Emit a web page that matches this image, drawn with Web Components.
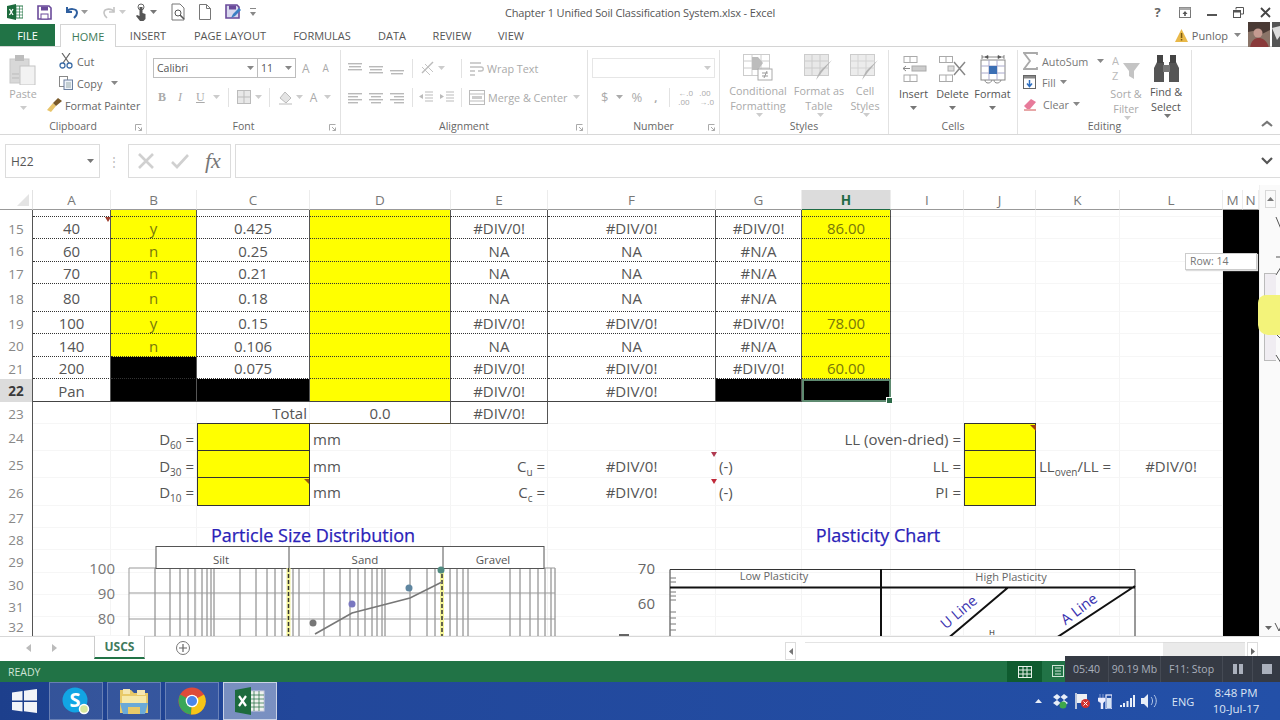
<!DOCTYPE html>
<html>
<head>
<meta charset="utf-8">
<title>Chapter 1 Unified Soil Classification System.xlsx - Excel</title>
<style>
  html, body { margin: 0; height: 720px; overflow: hidden; background: #fff; }
  body { display: flex; flex-direction: column; font-family: "Open Sans", "Liberation Sans", sans-serif; position: relative; }
</style>
</head>
<body>
<xl-titlebar></xl-titlebar>
<xl-tabs></xl-tabs>
<xl-ribbon></xl-ribbon>
<xl-formula-bar></xl-formula-bar>
<xl-sheet></xl-sheet>
<xl-sheet-tabs></xl-sheet-tabs>
<xl-status></xl-status>
<win-taskbar></win-taskbar>

<script>
// small svg helper: w, h, inner markup
const svg = (w, h, inner) => `<svg xmlns="http://www.w3.org/2000/svg" width="${w}" height="${h}" viewBox="0 0 ${w} ${h}" style="display:block;flex:none">${inner}</svg>`;

const caret = (c = '#888') => svg(7, 4, `<path d="M0 0h7L3.5 4z" fill="${c}"/>`);

// lines used by the alignment icons
const lines = (rows, c = '#b9b9b9') => svg(16, 14, rows.map(r => `<rect x="${r[0]}" y="${r[1]}" width="${r[2]}" height="1.4" fill="${c}"/>`).join(''));

const ICONS = {
  xl: svg(16, 16, `<rect x="6" y="2" width="10" height="12" fill="#fff" stroke="#2a7a4a"/><path d="M9 2v12M12.5 2v12M6 5h10M6 8h10M6 11h10" stroke="#2a7a4a" stroke-width=".7"/><path d="M0 2l9-2v16l-9-2z" fill="#1d6b3d"/><path d="M2.5 5l3.5 6M6 5l-3.5 6" stroke="#fff" stroke-width="1.3"/>`),
  save: svg(15, 15, `<path d="M1 1h11l2 2v11H1z" fill="#fff" stroke="#6a4a9a" stroke-width="1.6"/><rect x="4" y="1.5" width="7" height="4" fill="#6a4a9a"/><rect x="4" y="9" width="7" height="5" fill="#fff" stroke="#6a4a9a"/>`),
  undo: svg(16, 14, `<path d="M4 2v5h5" fill="none" stroke="#2f5f9f" stroke-width="2"/><path d="M4 7c2-4 10-4 10 1 0 2-1 3-3 5" fill="none" stroke="#2f5f9f" stroke-width="2"/>`),
  redo: svg(16, 14, `<path d="M12 2v5H7" fill="none" stroke="#c4c4c4" stroke-width="1.6"/><path d="M12 7C10 3 2 3 2 8c0 2 1 3 3 5" fill="none" stroke="#c4c4c4" stroke-width="1.6"/>`),
  touch: svg(14, 18, `<circle cx="7" cy="4" r="3" fill="none" stroke="#666"/><path d="M5.5 4h3v6l3 1v5l-2 2H6l-4-5 1-1 2.5 1z" fill="#555"/>`),
  preview: svg(15, 18, `<path d="M1 1h8l4 4v12H1z" fill="#fff" stroke="#777"/><circle cx="7" cy="10" r="3" fill="#fff" stroke="#555"/><path d="M9 12l4 4" stroke="#555" stroke-width="1.6"/>`),
  page: svg(12, 16, `<path d="M.5.5h7l4 4v11H.5z" fill="#fff" stroke="#777"/><path d="M7.5.5v4h4" fill="none" stroke="#777"/>`),
  saveas: svg(16, 16, `<path d="M1 1h11l2 2v11H1z" fill="#d8d8ee" stroke="#6a4a9a" stroke-width="1.6"/><rect x="4" y="1.5" width="7" height="4" fill="#6a4a9a"/><path d="M6 14l2-4 6-6 2 2-6 6z" fill="#3a7fc4"/>`),
  qat: svg(6, 8, `<path d="M0 0h6v1H0zM0 4h6L3 8z" fill="#888"/>`),
  help: `<span style="font:700 13px 'Open Sans',sans-serif;color:#666">?</span>`,
  display: svg(12, 11, `<rect x=".5" y=".5" width="11" height="10" fill="none" stroke="#777"/><rect x=".5" y=".5" width="11" height="2.5" fill="#aaa"/><path d="M6 4l2.5 3h-5zM5.2 7h1.6v2H5.2z" fill="#555"/>`),
  min: svg(10, 10, `<rect x="0" y="7" width="10" height="2" fill="#555"/>`),
  restore: svg(11, 11, `<path d="M3 2.5V.5h7.5V7H8" fill="none" stroke="#555"/><rect x=".5" y="3.5" width="7" height="7" fill="#fff" stroke="#555"/><rect x=".5" y="3.5" width="7" height="2" fill="#555"/>`),
  close: svg(11, 11, `<path d="M1 1l9 9M10 1l-9 9" stroke="#444" stroke-width="1.8"/>`),
  warn: svg(13, 14, `<path d="M6.5 1L13 14H0z" fill="#e9b949"/><rect x="5.8" y="5" width="1.5" height="5" fill="#7a5a10"/><rect x="5.8" y="11" width="1.5" height="1.5" fill="#7a5a10"/>`),
  avatar: svg(22, 26, `<rect width="22" height="26" fill="#8a7468"/><path d="M0 0h22v8L14 12 10 8 0 10z" fill="#4a3a35"/><circle cx="10" cy="11" r="4.5" fill="#c49a90"/><path d="M2 26c1-9 6-10 9-10s8 2 10 10z" fill="#8a3a3a"/>`),
  avatar2: svg(8, 26, `<rect width="8" height="26" fill="#555"/><path d="M0 6l5 12 3-4V4z" fill="#ddd"/>`),
  paste: svg(28, 30, `<rect x="1" y="4" width="19" height="24" fill="#d8d8d8" stroke="#c8c8c8"/><rect x="6" y="0" width="9" height="6" fill="#bdbdbd"/><rect x="11" y="11" width="15" height="19" fill="#f2f2f2" stroke="#c4c4c4"/><path d="M3 19h7M3 23h7" stroke="#bbb"/>`),
  cut: svg(14, 16, `<path d="M3 0l7 10M11 0L4 10" stroke="#666" stroke-width="1.2"/><circle cx="3.5" cy="12.5" r="2.5" fill="none" stroke="#3f6fa8" stroke-width="1.3"/><circle cx="10.5" cy="12.5" r="2.5" fill="none" stroke="#3f6fa8" stroke-width="1.3"/>`),
  copy: svg(14, 14, `<rect x=".5" y=".5" width="8" height="10" fill="#fff" stroke="#888"/><rect x="5" y="4" width="8.5" height="9.5" fill="#eef3fa" stroke="#6a7fa0"/><path d="M7 7h5M7 9h5M7 11h5" stroke="#9aa"/>`),
  brush: svg(15, 14, `<path d="M0 12l6-7 3 3-5 6z" fill="#e8c46a"/><path d="M6 5l5-5 4 3-6 5z" fill="#7a5a2a"/>`),
  borders: svg(14, 14, `<rect x=".5" y=".5" width="13" height="13" fill="#e8e8e8" stroke="#bbb"/><path d="M7 1v12M1 7h12" stroke="#bbb"/>`),
  fill: svg(15, 15, `<path d="M2 8l5-6 6 6-5 5z" fill="#e4e4e4" stroke="#bbb"/><rect x="1" y="13" width="13" height="2" fill="#ddd"/>`),
  orient: svg(16, 14, `<path d="M2 12L13 1" stroke="#bbb" stroke-width="1.4"/><path d="M2 6l8 8M5 3l8 8" stroke="#c4c4c4"/>`),
  indentL: svg(14, 12, `<path d="M6 1h8M6 4h8M6 7h8M6 10h8" stroke="#bbb"/><path d="M4 3L0 5.5 4 8z" fill="#bbb"/>`),
  indentR: svg(14, 12, `<path d="M6 1h8M6 4h8M6 7h8M6 10h8" stroke="#bbb"/><path d="M0 3l4 2.5L0 8z" fill="#bbb"/>`),
  wrap: svg(15, 15, `<path d="M1 2h11M1 6h11c3 0 3 4 0 4H9M1 10h5M1 14h5" stroke="#c0c0c0" fill="none" stroke-width="1.3"/>`),
  merge: svg(16, 15, `<rect x=".5" y=".5" width="15" height="14" fill="#fff" stroke="#bbb"/><path d="M1 4h14M1 11h14" stroke="#bbb"/><rect x="3" y="6" width="10" height="3" fill="#ccc"/>`),
  cond: svg(30, 27, `<rect x=".5" y=".5" width="26" height="21" fill="#fff" stroke="#ccc"/><path d="M9 1v21M18 1v21M1 7h26M1 14h26" stroke="#ccc"/><path d="M9 3h6l5 6-5 7H9z" fill="#bcbcbc"/><rect x="15" y="15" width="14" height="11" fill="#fff" stroke="#aaa"/><path d="M19 19h6M19 22h6M24 17l-3 7" stroke="#999"/>`),
  table: svg(30, 27, `<rect x=".5" y=".5" width="24" height="21" fill="#e8e8e8" stroke="#ccc"/><path d="M8 1v21M16 1v21M1 7h24M1 14h24" stroke="#ccc"/><path d="M28 6l-10 12-6 8c2-5 3-8 6-11z" fill="#b4b4b4"/>`),
  styles: svg(30, 27, `<rect x=".5" y=".5" width="24" height="21" fill="#ececec" stroke="#ccc"/><path d="M8 1v21M16 1v21M1 7h24M1 14h24" stroke="#d4d4d4"/><path d="M28 6l-10 12-6 8c2-5 3-8 6-11z" fill="#b4b4b4"/>`),
  insert: svg(26, 26, `<rect x="3" y=".5" width="13" height="6" fill="#fff" stroke="#aaa"/><path d="M9 1v6" stroke="#aaa"/><rect x="3" y="19" width="13" height="6.5" fill="#fff" stroke="#aaa"/><path d="M9 19v7" stroke="#aaa"/><rect x="11" y="10" width="14" height="5" fill="#ccc" stroke="#aaa"/><path d="M9 12.5H2M5 10l-3 2.5L5 15" stroke="#888" fill="none"/>`),
  del: svg(27, 26, `<rect x=".5" y=".5" width="13" height="6" fill="#fff" stroke="#aaa"/><path d="M7 1v6" stroke="#aaa"/><rect x=".5" y="19" width="13" height="6.5" fill="#fff" stroke="#aaa"/><path d="M7 19v7" stroke="#aaa"/><rect x="9" y="10" width="6" height="5" fill="#ddd" stroke="#aaa"/><path d="M15 6l11 13M26 6L15 19" stroke="#888" stroke-width="1.5"/>`),
  format: svg(28, 29, `<path d="M3 2h22M3 0v4M25 0v4M6 2l3-1.5v3zM22 2l-3-1.5v3z" stroke="#555" fill="#555" stroke-width=".7"/><rect x="2" y="5" width="24" height="20" fill="#fff" stroke="#888"/><path d="M10 5v20M18 5v20M2 11h24M2 18h24" stroke="#aac"/><rect x="10" y="11" width="8" height="8" fill="#3b6fb4"/><path d="M6 25c0 4 6 4 7 0M15 25c0 4 6 4 7 0" fill="none" stroke="#888"/>`),
  sigma: svg(15, 18, `<path d="M14 3V1H1l6 8-6 8h13v-2" fill="none" stroke="#aaa" stroke-width="1.8"/>`),
  down: svg(13, 14, `<rect x=".5" y=".5" width="12" height="13" fill="#fff" stroke="#666"/><rect x="1" y="1" width="11" height="2.5" fill="#888"/><path d="M6.5 5v6M4 8.5l2.5 3 2.5-3" fill="none" stroke="#2f6fc0" stroke-width="1.5"/>`),
  eraser: svg(14, 14, `<path d="M1 9l7-7 5 3-6 7H4z" fill="#e77a9a"/><path d="M1 13h12" stroke="#d05050"/>`),
  sort: svg(28, 30, `<text x="0" y="11" font-family="Open Sans" font-size="11" fill="#bbb">A</text><text x="0" y="26" font-family="Open Sans" font-size="11" fill="#bbb">Z</text><path d="M11 9h17l-6 8v8l-5-3v-5z" fill="#c4c4c4"/>`),
  find: svg(25, 28, `<path d="M3 8h7v20H0V14zM15 8h7l3 6v14H15z" fill="#555"/><rect x="3" y="1" width="6" height="8" fill="#444"/><rect x="16" y="1" width="6" height="8" fill="#444"/><rect x="9" y="11" width="7" height="7" fill="#777"/>`),
  launcher: svg(7, 7, `<path d="M.5 6.5v-6h6" fill="none" stroke="#aaa"/><path d="M3 3l3.5 3.5M6.5 3.5v3h-3" fill="none" stroke="#aaa"/>`),
  x: svg(18, 18, `<path d="M2 2l14 14M16 2L2 16" stroke="#d0d0d0" stroke-width="2.6"/>`),
  check: svg(20, 16, `<path d="M2 9l5 5L18 2" fill="none" stroke="#d0d0d0" stroke-width="2.6"/>`),
  chev: (d, c = '#666') => svg(12, 8, `<path d="${d}" fill="none" stroke="${c}" stroke-width="2.2"/>`)
};

class XlTitlebar extends HTMLElement {
  connectedCallback() {
    this._root = this.attachShadow({ mode: 'open' });
    const qat = [[ICONS.xl, 14], [ICONS.save, 11], [ICONS.undo, 2], [caret('#999'), 14], [ICONS.redo, 1], [caret('#ccc'), 8], [ICONS.touch, 2], [caret('#777'), 14], [ICONS.preview, 13], [ICONS.page, 14], [ICONS.saveas, 9], [ICONS.qat, 0]];
    this._root.innerHTML = `
      <style>
        :host { display: grid; grid-template-columns: 1fr auto 1fr; align-items: center; height: 24px; flex: none; background: #fff; }
        .qat { display: flex; align-items: center; padding-left: 7px; }
        .title { font-size: 11px; color: #555; letter-spacing: -.15px; }
        .win { display: flex; justify-content: flex-end; align-items: center; gap: 16px; padding-right: 9px; }
        .win > * { flex: none; width: 11px; display: flex; justify-content: center; }
      </style>
      <div class="qat">${qat.map(q => `<span style="margin-right:${q[1]}px">${q[0]}</span>`).join('')}</div>
      <div class="title">Chapter 1 Unified Soil Classification System.xlsx - Excel</div>
      <div class="win"><span>${ICONS.help}</span><span>${ICONS.display}</span><span>${ICONS.min}</span><span>${ICONS.restore}</span><span>${ICONS.close}</span></div>
    `;
  }
}
customElements.define('xl-titlebar', XlTitlebar);

class XlTabs extends HTMLElement {
  connectedCallback() {
    this._root = this.attachShadow({ mode: 'open' });
    const tabs = [['INSERT', 64], ['PAGE LAYOUT', 100], ['FORMULAS', 84], ['DATA', 56], ['REVIEW', 64], ['VIEW', 54]];
    this._root.innerHTML = `
      <style>
        :host { display: flex; align-items: stretch; height: 23px; flex: none; background: #fff; border-bottom: 1px solid #d4d4d4; box-sizing: border-box; position: relative; font-size: 11px; color: #555; }
        div { display: flex; align-items: center; justify-content: center; }
        .file { width: 55px; background: #217346; color: #fff; margin-right: 5px; }
        .home { width: 56px; color: #3c7a58; background: #fff; border: 1px solid #d4d4d4; border-bottom: 0; margin-bottom: -1px; box-sizing: border-box; }
        .user { margin-left: auto; }
        .user span { color: #666; margin: 0 6px 0 4px; }
      </style>
      <div class="file">FILE</div>
      <div class="home">HOME</div>
      ${tabs.map(t => `<div style="width:${t[1]}px">${t[0]}</div>`).join('')}
      <div class="user">${ICONS.warn}<span>Punlop</span>${caret('#888')}<i style="width:7px"></i>${ICONS.avatar}<i style="width:2px"></i>${ICONS.avatar2}</div>
    `;
  }
}
customElements.define('xl-tabs', XlTabs);

// one labelled section of the ribbon
class XlGroup extends HTMLElement {
  connectedCallback() {
    this._root = this.attachShadow({ mode: 'open' });
    const launcher = this.hasAttribute('launcher') ? `<span class="l">${ICONS.launcher}</span>` : '';
    this._root.innerHTML = `
      <style>
        :host { display: flex; flex-direction: column; box-sizing: border-box; flex: none; height: 84px; border-right: 1px solid #e2e2e2; position: relative; }
        .body { flex: 1; min-height: 0; display: flex; }
        .label { height: 18px; font-size: 10.5px; color: #666; text-align: center; line-height: 20px; }
        .l { position: absolute; right: 4px; bottom: 3px; }
      </style>
      <div class="body"><slot></slot></div>
      <div class="label">${this.getAttribute('label')}</div>
      ${launcher}
    `;
  }
}
customElements.define('xl-group', XlGroup);

// big ribbon button: icon over a two line label
class XlBigButton extends HTMLElement {
  connectedCallback() {
    this._root = this.attachShadow({ mode: 'open' });
    this._root.innerHTML = `
      <style>
        :host { display: flex; flex-direction: column; align-items: center; flex: none; width: ${this.getAttribute('w')}px; font-size: 10.8px; line-height: 15px; color: ${this.getAttribute('color') || '#aaa'}; text-align: center; white-space: nowrap; }
        .i { height: 30px; margin-top: 4px; margin-bottom: 2px; display: flex; align-items: center; }
      </style>
      <div class="i"><slot name="icon"></slot></div>
      <slot></slot>
    `;
  }
}
customElements.define('xl-big-button', XlBigButton);

class XlRibbon extends HTMLElement {
  connectedCallback() {
    this._root = this.attachShadow({ mode: 'open' });
    const big = (w, icon, html, color) => `<xl-big-button w="${w}" color="${color || '#aaa'}"><span slot="icon">${icon}</span>${html}</xl-big-button>`;
    const dd = c => `<span style="display:inline-block;vertical-align:middle;margin-left:3px">${caret(c)}</span>`;
    const cc = `<span style="display:flex;justify-content:center;margin-top:5px">${caret('#777')}</span>`;
    this._root.innerHTML = `
      <style>
        :host { display: flex; height: 88px; flex: none; background: #fff; border-bottom: 1px solid #d8d8d8; box-sizing: border-box; padding-top: 3px; font-size: 10.8px; color: #666; position: relative; white-space: nowrap; }
        .paste { width: 46px; padding: 5px 0 0 9px; box-sizing: border-box; font-size: 10.8px; color: #aaa; text-align: center; }
        .paste span { display: block; width: 28px; }
        .clip { display: flex; flex-direction: column; gap: 6px; padding-top: 3px; margin-left: 1px; }
        .row { display: flex; align-items: center; gap: 4px; height: 16px; }
        .col { display: flex; flex-direction: column; }
        .box { display: flex; align-items: center; height: 20px; border: 1px solid #bdbdbd; box-sizing: border-box; font-size: 10.5px; color: #555; padding: 0 3px; justify-content: space-between; }
        .font-row { display: flex; align-items: center; margin: 8px 0 0 5px; }
        .tools { display: flex; align-items: center; margin: 11px 0 0 11px; color: #aaa; font-family: "Liberation Serif", serif; font-size: 12px; font-weight: 700; height: 16px; }
        .sep { flex: none; width: 1px; height: 19px; background: #e2e2e2; }
        .al { display: flex; align-items: center; height: 22px; color: #aaa; }
        .muted { color: #aaa; }
        .num { color: #aaa; }
        .edit { display: flex; flex-direction: column; padding: 3px 0 0 5px; gap: 5px; width: 88px; box-sizing: border-box; }
        .edit .row { color: #777; }
        .collapse { position: absolute; left: 1261px; top: 73px; }
      </style>

      <xl-group label="Clipboard" launcher style="width:147px;">
        <div class="paste"><span>${ICONS.paste}</span><span style="margin-top:1px">Paste</span><span style="display:flex;justify-content:center;margin-top:5px">${caret('#ccc')}</span></div>
        <div class="clip">
          <div class="row" style="margin-left:12px">${ICONS.cut}<span>Cut</span></div>
          <div class="row" style="margin-left:12px">${ICONS.copy}<span>Copy</span><span style="margin-left:5px">${caret('#888')}</span></div>
          <div class="row" style="margin-left:0">${ICONS.brush}<span style="margin-left:-1px">Format Painter</span></div>
        </div>
      </xl-group>

      <xl-group label="Font" launcher style="width:194px;">
        <div class="col">
          <div class="font-row">
            <div class="box" style="width:105px;margin-left:1px">Calibri${caret('#888')}</div>
            <div class="box" style="width:39px;margin-left:-1px">11${caret('#888')}</div>
            <span class="muted" style="margin-left:6px;font-size:12px">A</span><span class="muted" style="margin-left:13px;font-size:10px">A</span>
          </div>
          <div class="tools">
            <span>B</span><span style="margin-left:12px;font-style:italic;font-weight:400">I</span><span style="margin-left:14px;text-decoration:underline;font-weight:400">U</span><span style="margin-left:8px">${caret('#ccc')}</span>
            <span class="sep" style="margin:0 8px"></span>${ICONS.borders}<span style="margin-left:4px">${caret('#ccc')}</span>
            <span class="sep" style="margin:0 8px 0 7px"></span>${ICONS.fill}<span style="margin-left:3px">${caret('#ccc')}</span>
            <span style="margin-left:7px;font:12px 'Open Sans',sans-serif">A</span><span style="margin-left:7px">${caret('#ccc')}</span>
          </div>
        </div>
      </xl-group>

      <xl-group label="Alignment" launcher style="width:247px;">
        <div class="col" style="padding:7px 0 0 7px">
          <div class="al">
            ${lines([[0, 2, 14], [1, 5, 12], [0, 8, 14]])}<span style="width:5px"></span>${lines([[0, 5, 14], [1, 8, 12], [0, 11, 14]])}<span style="width:5px"></span>${lines([[0, 9, 14], [1, 12, 12]])}
            <span class="sep" style="margin:0 7px 0 6px"></span>${ICONS.orient}<span style="margin-left:2px">${caret('#ccc')}</span>
            <span class="sep" style="margin:0 7px 0 16px"></span>${ICONS.wrap}<span style="margin-left:3px">Wrap Text</span>
          </div>
          <div class="al" style="margin-top:7px">
            ${lines([[0, 3, 14], [0, 6, 10], [0, 9, 14], [0, 12, 10]])}<span style="width:5px"></span>${lines([[0, 3, 14], [2, 6, 10], [0, 9, 14], [2, 12, 10]])}<span style="width:5px"></span>${lines([[0, 3, 14], [4, 6, 10], [0, 9, 14], [4, 12, 10]])}
            <span class="sep" style="margin:0 6px"></span>${ICONS.indentL}<span style="width:7px"></span>${ICONS.indentR}
            <span class="sep" style="margin:0 7px"></span>${ICONS.merge}<span style="margin-left:3px">Merge &amp; Center</span><span style="margin-left:6px">${caret('#ccc')}</span>
          </div>
        </div>
      </xl-group>

      <xl-group label="Number" launcher style="width:132px;">
        <div class="col" style="padding:8px 0 0 4px">
          <div class="box" style="width:123px;border-color:#e6e6e6;justify-content:flex-end;">${caret('#ccc')}</div>
          <div class="al num" style="margin-top:8px">
            <span style="margin-left:9px;font-size:13px">$</span><span style="margin:0 8px 0 8px">${caret('#aaa')}</span>
            <span style="font-size:13px">%</span><span style="margin-left:12px;font-weight:700">,</span>
            <span class="sep" style="margin:0 8px 0 12px"></span><span style="flex:none;width:17px;font-size:8px;line-height:9px">&#8592;.0<br>.00</span><span style="flex:none;width:16px;margin-left:4px;font-size:8px;line-height:9px">.00<br>&#8594;.0</span>
          </div>
        </div>
      </xl-group>

      <xl-group label="Styles" style="width:169px;">
        ${big(76, ICONS.cond, `Conditional<br>Formatting${dd('#ccc')}`)}
        ${big(46, ICONS.table, `Format as<br>Table${dd('#ccc')}`)}
        ${big(46, ICONS.styles, `Cell<br>Styles${dd('#ccc')}`)}
      </xl-group>

      <xl-group label="Cells" style="width:129px;">
        <span style="width:5px"></span>
        ${big(39, ICONS.insert, `Insert${cc}`, '#555')}
        ${big(39, ICONS.del, `Delete${cc}`, '#555')}
        ${big(41, ICONS.format, `Format${cc}`, '#555')}
      </xl-group>

      <xl-group label="Editing" style="width:174px;">
        <div class="edit">
          <div class="row muted">${ICONS.sigma}<span>AutoSum</span><span style="margin-left:5px">${caret('#888')}</span></div>
          <div class="row">${ICONS.down}<span style="margin-left:2px">Fill</span>${caret('#888')}</div>
          <div class="row" style="margin-top:1px">${ICONS.eraser}<span style="margin-left:2px">Clear</span>${caret('#888')}</div>
        </div>
        ${big(40, ICONS.sort, `Sort &amp;<br>Filter${dd('#ccc')}`)}
        ${big(40, ICONS.find, `Find &amp;<br>Select${dd('#777')}`, '#555')}
      </xl-group>

      <span class="collapse">${ICONS.chev('M1 6l5-4 5 4', '#777')}</span>
    `;
  }
}
customElements.define('xl-ribbon', XlRibbon);

class XlFormulaBar extends HTMLElement {
  connectedCallback() {
    this._root = this.attachShadow({ mode: 'open' });
    this._root.innerHTML = `
      <style>
        :host { display: flex; align-items: flex-start; height: 50px; flex: none; background: #fff; box-sizing: border-box; padding: 9px 0 0 5px; }
        .name { width: 95px; height: 34px; border: 1px solid #dcdcdc; box-sizing: border-box; display: flex; align-items: center; justify-content: space-between; padding: 0 5px; font-size: 12px; color: #555; }
        .dots { width: 28px; height: 34px; display: flex; justify-content: center; align-items: center; color: #bbb; font-size: 12px; line-height: 5px; }
        .fx { width: 103px; height: 34px; border: 1px solid #dcdcdc; box-sizing: border-box; display: flex; align-items: center; padding-left: 8px; gap: 15px; }
        .fx i { font: italic 400 22px "Liberation Serif", serif; color: #777; }
        .input { flex: 1; height: 34px; border: 1px solid #dcdcdc; border-right: 0; margin-left: 4px; box-sizing: border-box; display: flex; justify-content: flex-end; align-items: center; padding-right: 7px; }
      </style>
      <div class="name">H22${caret('#777')}</div>
      <div class="dots">&#8942;</div>
      <div class="fx">${ICONS.x}${ICONS.check}<i>fx</i></div>
      <div class="input">${ICONS.chev('M1 1l5 5 5-5', '#555')}</div>
    `;
  }
}
customElements.define('xl-formula-bar', XlFormulaBar);

// spreadsheet: cells come from this table, charts float over them
class XlSheet extends HTMLElement {
  connectedCallback() {
    this._root = this.attachShadow({ mode: 'open' });
    this._cols = [['A', 78], ['B', 86], ['C', 113], ['D', 141], ['E', 97], ['F', 168], ['G', 86], ['H', 89], ['I', 73], ['J', 72], ['K', 84], ['L', 103], ['M', 20], ['N', 16]];
    this._rows = [
      { n: '', h: 7, k: 'top', c: { B: ['', 'y'], D: ['', 'y'], H: ['', 'y'] } },
      { n: 15, h: 22, k: 'dot', c: { A: ['40'], B: ['y', 'y'], C: ['0.425'], D: ['', 'y'], E: ['#DIV/0!'], F: ['#DIV/0!'], G: ['#DIV/0!'], H: ['86.00', 'y'] } },
      { n: 16, h: 23, k: 'dot', c: { A: ['60'], B: ['n', 'y'], C: ['0.25'], D: ['', 'y'], E: ['NA'], F: ['NA'], G: ['#N/A'], H: ['', 'y'] } },
      { n: 17, h: 22, k: 'dot', c: { A: ['70'], B: ['n', 'y'], C: ['0.21'], D: ['', 'y'], E: ['NA'], F: ['NA'], G: ['#N/A'], H: ['', 'y'] } },
      { n: 18, h: 28, k: 'dot', c: { A: ['80'], B: ['n', 'y'], C: ['0.18'], D: ['', 'y'], E: ['NA'], F: ['NA'], G: ['#N/A'], H: ['', 'y'] } },
      { n: 19, h: 22, k: 'dot', c: { A: ['100'], B: ['y', 'y'], C: ['0.15'], D: ['', 'y'], E: ['#DIV/0!'], F: ['#DIV/0!'], G: ['#DIV/0!'], H: ['78.00', 'y'] } },
      { n: 20, h: 23, k: 'dot', c: { A: ['140'], B: ['n', 'y'], C: ['0.106'], D: ['', 'y'], E: ['NA'], F: ['NA'], G: ['#N/A'], H: ['', 'y'] } },
      { n: 21, h: 22, k: 'dot', c: { A: ['200'], B: ['', 'b'], C: ['0.075'], D: ['', 'y'], E: ['#DIV/0!'], F: ['#DIV/0!'], G: ['#DIV/0!'], H: ['60.00', 'y'] } },
      { n: 22, h: 23, k: 'last', sel: true, c: { A: ['Pan'], B: ['', 'b'], C: ['', 'b'], D: ['', 'y'], E: ['#DIV/0!'], F: ['#DIV/0!'], G: ['', 'b'], H: ['', 'b sel'] } },
      { n: 23, h: 22, k: 'tot', c: { C: ['Total', 'r under'], D: ['0.0', 'under'], E: ['#DIV/0!', 'boxed'] } },
      { n: 24, h: 27, low: true, c: { B: ['D<sub>60</sub> =', 'r'], C: ['', 'y line'], D: ['mm', 'l'], I: ['LL (oven-dried) =', 'r'], J: ['', 'y line'] } },
      { n: 25, h: 27, low: true, c: { B: ['D<sub>30</sub> =', 'r'], C: ['', 'y line'], D: ['mm', 'l'], E: ['C<sub>u</sub> =', 'r'], F: ['#DIV/0!'], G: ['(-)', 'l'], I: ['LL =', 'r'], J: ['', 'y line'], K: ['LL<sub>oven</sub>/LL =', 'l'], L: ['#DIV/0!'] } },
      { n: 26, h: 28, c: { B: ['D<sub>10</sub> =', 'r'], C: ['', 'y line'], D: ['mm', 'l'], E: ['C<sub>c</sub> =', 'r'], F: ['#DIV/0!'], G: ['(-)', 'l'], I: ['PI =', 'r'], J: ['', 'y line'] } },
      { n: 27, h: 22, c: {} }, { n: 28, h: 22, c: {} }, { n: 29, h: 23, c: {} },
      { n: 30, h: 22, c: {} }, { n: 31, h: 22, c: {} }, { n: 32, h: 19, c: {} }
    ];
    const letters = this._cols.map(c => `<div class="ch ${c[0] === 'H' ? 'on' : ''}">${c[0]}</div>`).join('');
    const body = this._rows.map(r => {
      const cells = this._cols.map(c => {
        const d = r.c[c[0]] || [''];
        const main = 'ABCDEFGH'.includes(c[0]);
        const cls = ['cell', d[1] || '', r.low ? 'low' : '', main && r.k ? r.k : '', main && (r.k && r.k !== 'tot') ? 'vb' : '', (c[0] === 'M' || c[0] === 'N') ? 'b' : ''];
        return `<div class="${cls.join(' ')}">${d[0] ? `<span>${d[0]}</span>` : ''}</div>`;
      }).join('');
      return `<div class="rh ${r.sel ? 'on' : ''}">${r.n}</div>${cells}`;
    }).join('');
    this._root.innerHTML = `
      <style>
        :host { display: block; height: 451px; flex: none; position: relative; overflow: hidden; background: #fff; }
        .grid { display: grid; grid-template-columns: 33px ${this._cols.map(c => c[1] + 'px').join(' ')}; grid-template-rows: 20px ${this._rows.map(r => r.h + 'px').join(' ')}; margin-top: 5px; width: 1259px; font-size: 15px; color: #555; }
        .corner { border-right: 1px solid #e2e2e2; border-bottom: 1px solid #999; box-sizing: border-box; position: relative; }
        .corner::after { content: ""; position: absolute; right: 3px; bottom: 3px; border-style: solid; border-width: 0 0 12px 12px; border-color: transparent transparent #e4e4e4 transparent; }
        .ch { display: flex; align-items: center; justify-content: center; font-size: 13.5px; color: #777; border-right: 1px solid #ececec; border-bottom: 1px solid #999; box-sizing: border-box; }
        .ch.on { background: #dcdcdc; color: #1f6b45; font-weight: 700; border-bottom: 1px solid #1f6b45; }
        .rh { display: flex; align-items: center; justify-content: center; font-size: 13.5px; color: #888; border-right: 1px solid #555; box-sizing: border-box; padding-top: 1px; }
        .rh.on { background: #dcdcdc; color: #3a3a3a; font-weight: 700; }
        .cell { display: flex; align-items: center; justify-content: center; box-sizing: border-box; white-space: nowrap; padding-top: 1px; position: relative; border-right: 1px solid #f4f4f4; border-bottom: 1px solid #f6f6f6; }
        .low { padding-top: 3px; }
        .y { background: #ffff00; color: #77770c; border-color: #ffff00; }
        .b { background: #000; border-color: #000; }
        .r { justify-content: flex-end; padding-right: 2px; }
        .l { justify-content: flex-start; padding-left: 3px; }
        .dot, .top { border-bottom: 1px dotted #333; }
        .last { border-bottom: 1px solid #444; }
        .vb { border-right: 1px solid #555; }
        .under { border-bottom: 1px solid #5a4a20; }
        .boxed { border: 1px solid #555; border-top: 0; margin-left: -1px; }
        .line { border: 1px solid #333; border-top: 0; box-shadow: 0 -1px 0 #333; }
        .sel { outline: 2px solid #5e8a70; outline-offset: -2px; }
        .sel::after { content: ""; position: absolute; right: -3px; bottom: -3px; width: 5px; height: 5px; background: #2c6a48; border: 1px solid #fff; z-index: 3; }
        sub { font-size: 10px; line-height: 0; }
        .tip { position: absolute; left: 1185px; top: 68px; width: 72px; height: 17px; background: #fff; border: 1px solid #ccc; box-sizing: border-box; font-size: 10.5px; color: #777; line-height: 15px; padding-left: 4px; box-shadow: 1px 1px 1px #ddd; z-index: 4; }
        .note { position: absolute; width: 0; height: 0; border-style: solid; z-index: 3; }
        .sb { position: absolute; left: 1259px; top: 0; width: 21px; height: 451px; background: #fafafa; border-left: 1px solid #f0f0f0; box-sizing: border-box; }
        .up { position: absolute; left: 5px; top: 5px; width: 11px; height: 18px; border: 1px solid #d8d8d8; box-sizing: border-box; display: flex; align-items: center; justify-content: center; }
        .thumb { position: absolute; left: 4px; top: 88px; width: 12px; height: 88px; border: 1px solid #bbb; border-right: 0; background: #f0edf2; box-sizing: border-box; }
        .smear { position: absolute; left: -2px; top: 110px; width: 23px; height: 40px; background: #f3f37a; border-radius: 8px 0 0 10px; z-index: 1; }
        .dn { position: absolute; left: 5px; top: 441px; }
        .ovl { position: absolute; left: 0; top: 0; z-index: 2; }
      </style>
      <div class="grid"><div class="corner"></div>${letters}${body}</div>
      <span class="note" style="left:105px;top:32px;border-width:5px 3px 0 3px;border-color:#a04030 transparent transparent transparent"></span>
      <span class="note" style="left:711px;top:267px;border-width:5px 3px 0 3px;border-color:#b03a50 transparent transparent transparent"></span>
      <span class="note" style="left:711px;top:294px;border-width:5px 3px 0 3px;border-color:#c02a3a transparent transparent transparent"></span>
      <span class="note" style="left:304px;top:294px;border-width:0 5px 5px 0;border-color:transparent #9a5a10 transparent transparent"></span>
      <span class="note" style="left:1030px;top:240px;border-width:0 6px 6px 0;border-color:transparent #a04010 transparent transparent"></span>
      ${this._charts()}
      <div class="tip">Row: 14</div>
      <div class="sb">
        <div class="up">${svg(7, 4, '<path d="M0 4h7L3.5 0z" fill="#777"/>')}</div>
        <div class="thumb"></div>
        <div class="smear"></div>
        <div class="dn">${caret('#666')}</div>
        ${svg(21, 451, `<path d="M16 32l5 12M16 72h5M16 90l5-8M17 110l4 8M17 150l4 4M16 170l5 8M15 438l4 8l2-5" stroke="#555" fill="none"/>`).replace('style="', 'style="position:absolute;left:0;top:0;')}
      </div>
    `;
  }

  // both charts drawn in page coordinates, cropped by the sheet
  _charts() {
    const vs = [155, 170, 180, 188, 195, 202, 207, 211, 214, 240, 256, 267, 275, 282, 293, 299, 324, 340, 350, 358, 365, 372, 377, 382, 385, 410, 427, 435, 450, 457, 463, 468, 510, 520, 530, 538, 545, 551, 555];
    const ticks = [578, 582, 592, 596, 600, 612, 618, 624, 630].map(y => `M670 ${y}h6`).join('');
    return `<svg class="ovl" width="1259" height="451" viewBox="0 185 1259 451" font-family="'Open Sans',sans-serif">
      <g font-size="18" fill="#2a22b8" stroke="#2a22b8" stroke-width=".25" text-anchor="middle"><text x="313" y="542">Particle Size Distribution</text><text x="878" y="542">Plasticity Chart</text></g>

      <path d="${vs.map(x => `M${x} 568V640`).join('')}" stroke="#555" stroke-width=".8"/>
      <path d="M129 568H555M129 593H555M129 619H555M129 568V640" stroke="#999" fill="none"/>
      <rect x="156" y="546.5" width="388" height="22" fill="#fff" stroke="#555"/>
      <path d="M289 546V568M443 546V568" stroke="#555"/>
      <g font-size="11.5" fill="#555" text-anchor="middle"><text x="221" y="564">Silt</text><text x="365" y="564">Sand</text><text x="493" y="564">Gravel</text></g>
      <g font-size="15" fill="#777" text-anchor="end"><text x="115" y="574">100</text><text x="115" y="599">90</text><text x="115" y="624">80</text></g>
      <path d="M288.5 568V640M442 568V640" stroke="#f4f49a" stroke-width="4"/>
      <path d="M288.5 568V640M442 568V640" stroke="#333" stroke-width="1.5" stroke-dasharray="4 2"/>
      <path d="M315 634L352 613L410 598L442 582" fill="none" stroke="#777" stroke-width="1.6"/>
      <circle cx="313" cy="623" r="3.5" fill="#777"/><circle cx="352" cy="604" r="3.5" fill="#7a78c0"/><circle cx="409" cy="588" r="3.5" fill="#5f86a0"/><circle cx="441" cy="570" r="3.5" fill="#4f8a80"/>

      <g font-size="15" fill="#666" text-anchor="end"><text x="655" y="574">70</text><text x="655" y="609">60</text></g>
      <path d="M619 635h10" stroke="#333" stroke-width="1.5"/>
      <path d="M670 569.5H1135V640M670 569.5V640" stroke="#333" fill="none"/>
      <path d="${ticks}" stroke="#777"/>
      <path d="M670 587.5H1135M881 569V640M946 640L1008 587.5M1053 640L1135 586" stroke="#111" stroke-width="2" fill="none"/>
      <g font-size="11" fill="#666" text-anchor="middle"><text x="774" y="580">Low Plasticity</text><text x="1011" y="581">High Plasticity</text></g>
      <g font-size="14.5" fill="#3a32b0" text-anchor="middle"><text transform="translate(962 616) rotate(-40)">U Line</text><text transform="translate(1082 613) rotate(-37)">A Line</text></g>
      <text x="992" y="635" text-anchor="middle" font-size="8" fill="#222">H</text>
    </svg>`;
  }
}
customElements.define('xl-sheet', XlSheet);

class XlSheetTabs extends HTMLElement {
  connectedCallback() {
    this._root = this.attachShadow({ mode: 'open' });
    const arrow = d => svg(5, 8, `<path d="${d}" fill="#bbb"/>`);
    this._root.innerHTML = `
      <style>
        :host { display: flex; align-items: flex-start; height: 25px; flex: none; background: #fff; border-top: 1px solid #d8d8d8; box-sizing: border-box; }
        .nav { display: flex; width: 94px; height: 22px; gap: 21px; padding-left: 26px; box-sizing: border-box; align-items: center; }
        .tab { width: 51px; height: 23px; margin-top: -1px; background: #fff; border-left: 1px solid #ccc; border-right: 1px solid #ccc; border-bottom: 2px solid #217346; box-sizing: border-box; display: flex; align-items: center; justify-content: center; font-size: 12px; font-weight: 700; color: #3f7a5c; }
        .add { margin: 4px 0 0 31px; width: 14px; height: 14px; border: 1px solid #777; border-radius: 50%; display: flex; align-items: center; justify-content: center; box-sizing: border-box; }
        .scroll { position: absolute; left: 785px; width: 473px; height: 18px; margin-top: 5px; display: flex; align-items: stretch; box-sizing: border-box; }
        .track { flex: 1; background: #fff; border-top: 1px solid #e4e4e4; margin-left: 10px; }
        .thumb { width: 82px; background: #eaeaea; border-top: 1px solid #ddd; }
        .btn { width: 11px; display: flex; align-items: center; justify-content: center; border: 1px solid #ddd; box-sizing: border-box; }
      </style>
      <div class="nav">${arrow('M5 0v8L0 4z')}${arrow('M0 0v8l5-4z')}</div>
      <div class="tab">USCS</div>
      <div class="add">${svg(8, 8, '<path d="M4 0v8M0 4h8" stroke="#666" stroke-width="1.2"/>')}</div>
      <div class="scroll">
        <div class="btn" style="margin-right:-1px">${svg(4, 7, '<path d="M4 0v7L0 3.5z" fill="#777"/>')}</div>
        <div class="track"></div>
        <div class="thumb"></div>
        <div class="btn" style="margin-left:2px">${svg(4, 7, '<path d="M0 0v7l4-3.5z" fill="#666"/>')}</div>
      </div>
    `;
  }
}
customElements.define('xl-sheet-tabs', XlSheetTabs);

class XlStatus extends HTMLElement {
  connectedCallback() {
    this._root = this.attachShadow({ mode: 'open' });
    const normal = svg(14, 12, `<rect x=".5" y=".5" width="13" height="11" fill="none" stroke="#e8f2ea"/><path d="M5 1v10M9 1v10M1 4h12M1 8h12" stroke="#e8f2ea"/>`);
    const layout = svg(12, 12, `<rect x=".5" y=".5" width="11" height="11" fill="none" stroke="#cfe6d6"/><path d="M3 3h6M3 6h6M3 9h6" stroke="#cfe6d6"/>`);
    this._root.innerHTML = `
      <style>
        :host { display: flex; align-items: center; height: 21px; flex: none; background: #217346; color: #cfe3d6; font-size: 10.5px; box-sizing: border-box; padding-left: 8px; position: relative; }
        .v { position: absolute; left: 1007px; top: 0; width: 35px; height: 21px; background: #0f5b2f; display: flex; align-items: center; justify-content: center; }
        .p { position: absolute; left: 1052px; top: 4px; }
        .rec { position: absolute; left: 1065px; top: -5px; width: 215px; height: 26px; background: #353a44; color: #aab0bc; display: flex; align-items: center; font-size: 10.5px; z-index: 5; }
        .rec > div { display: flex; align-items: center; justify-content: center; height: 100%; border-right: 1px solid #454a54; box-sizing: border-box; flex: none; }
      </style>
      <span>READY</span>
      <div class="v">${normal}</div>
      <div class="p">${layout}</div>
      <div class="rec">
        <div style="width:44px">05:40</div>
        <div style="width:52px">90.19 Mb</div>
        <div style="width:62px">F11: Stop</div>
        <div style="width:30px">${svg(10, 10, '<path d="M0 0h4v10H0zM6 0h4v10H6z" fill="#aab0bc"/>')}</div>
        <div style="width:27px;border:0">${svg(10, 10, '<path d="M0 0h10v10H0z" fill="#aab0bc"/>')}</div>
      </div>
    `;
  }
}
customElements.define('xl-status', XlStatus);

class WinTaskbar extends HTMLElement {
  connectedCallback() {
    this._root = this.attachShadow({ mode: 'open' });
    const start = svg(25, 24, `<path d="M0 3.5L10.5 2v9.5H0zM12 1.8L25 0v11.5H12zM0 13h10.5v9.5L0 21zM12 13h13v11l-13-1.8z" fill="#f2f4f8"/>`);
    const skype = svg(28, 28, `<circle cx="13" cy="13" r="12.5" fill="#12a5e4"/><text x="13" y="20" text-anchor="middle" font-family="Open Sans" font-weight="700" font-size="20" fill="#fff">S</text><circle cx="22" cy="22" r="4.5" fill="#d6e89c" stroke="#fff" stroke-width="1.5"/>`);
    const folder = svg(30, 28, `<path d="M1 3h11l3 3h14v20H1z" fill="#e8c968"/><rect x="4" y="2" width="7" height="5" fill="#f5e6b0"/><rect x="18" y="3" width="8" height="5" fill="#f5e6b0"/><rect x="3" y="9" width="24" height="7" fill="#f6e8a8"/><path d="M1 16h28l-3 11H4z" fill="#6aa9d8"/><rect x="9" y="20" width="12" height="7" fill="#e8c968"/>`);
    const chrome = svg(28, 28, `<circle cx="14" cy="14" r="13.5" fill="#dd4b39"/><path d="M14 14L2.3 7.5A13.5 13.5 0 0 0 13 27.5z" fill="#3aa757"/><path d="M14 14l12-6.5A13.5 13.5 0 0 1 13 27.5z" fill="#f5c518"/><circle cx="14" cy="14" r="6.3" fill="#fff"/><circle cx="14" cy="14" r="5" fill="#4b86e8"/>`);
    const excel = svg(30, 28, `<rect x="14" y="4" width="15" height="20" fill="#eef2ee" stroke="#ccd"/><path d="M19 4v20M24 4v20M14 8h15M14 12h15M14 16h15M14 20h15" stroke="#1d6b3d" stroke-width=".7"/><path d="M0 3L16 0v28L0 25z" fill="#1d6b3d"/><path d="M4 9l7 10M11 9L4 19" stroke="#fff" stroke-width="2.2"/>`);
    const dropbox = svg(15, 15, `<path d="M4 0l3.5 3L4 6 0 3zM11 0l4 3-4 3-3.5-3zM4 6l3.5 3L4 12 0 9zM11 6l4 3-4 3-3.5-3z" fill="#e8eef8"/><circle cx="10" cy="11" r="3.5" fill="#3ea84a"/>`);
    const flag = svg(15, 16, `<path d="M1 0v16" stroke="#eee" stroke-width="1.5"/><path d="M2 1h10v9H2z" fill="#eef0f4"/><circle cx="10.5" cy="10.5" r="4.5" fill="#d23030"/><path d="M8.5 8.5l4 4M12.5 8.5l-4 4" stroke="#fff"/>`);
    const power = svg(14, 15, `<path d="M2 0v4M5 0v4M0 4h7v3l-2 2v6H3V9L0 7z" fill="#eef" stroke="#eef" stroke-width=".5"/><rect x="8" y="1" width="6" height="14" fill="none" stroke="#eef" stroke-width="1.2"/><rect x="9" y="4" width="4" height="10" fill="#d8e4f4"/>`);
    const signal = svg(15, 12, `<path d="M0 10h2v2H0zM3 8h2v4H3zM6.5 6h2v6h-2zM10 3h2v9h-2zM13 0h2v12h-2z" fill="#e8eef8"/>`);
    const sound = svg(16, 14, `<path d="M0 4h3l4-4v14l-4-4H0z" fill="#e8eef8"/><path d="M10 3c2 2 2 6 0 8M13 1c3 3 3 9 0 12" fill="none" stroke="#b4c8e8"/>`);
    const btn = (x, on) => `<div class="b ${on ? 'on' : ''}">${x}</div>`;
    this._root.innerHTML = `
      <style>
        :host { display: flex; align-items: stretch; height: 38px; flex: none; background: linear-gradient(90deg, #1d3f8c 0, #22479a 300px, #2350a8 100%); color: #dbe4f4; box-sizing: border-box; }
        .start { width: 49px; display: flex; align-items: center; justify-content: center; box-sizing: border-box; }
        .b { width: 54px; margin-right: 4px; display: flex; align-items: center; justify-content: center; background: rgba(255,255,255,.1); border: 1px solid rgba(255,255,255,.25); box-sizing: border-box; }
        .b.on { background: rgba(255,255,255,.4); border-color: rgba(255,255,255,.6); }
        .tray { margin-left: auto; display: flex; align-items: center; font-size: 11px; padding-right: 11px; }
        .tray span { flex: none; display: flex; justify-content: center; }
        .clock { text-align: center; width: 66px; font-size: 11.5px; line-height: 16px; }
      </style>
      <div class="start">${start}</div>
      ${btn(skype)}${btn(folder)}${btn(chrome)}${btn(excel, true)}
      <div class="tray">
        <span style="width:22px">${svg(7, 4, '<path d="M0 4h7L3.5 0z" fill="#e8eef8"/>')}</span>
        <span style="width:22px">${dropbox}</span>
        <span style="width:22px">${flag}</span>
        <span style="width:23px">${power}</span>
        <span style="width:22px">${signal}</span>
        <span style="width:22px">${sound}</span>
        <span style="width:40px;margin-left:3px">ENG</span>
        <div class="clock">8:48 PM<br>10-Jul-17</div>
      </div>
    `;
  }
}
customElements.define('win-taskbar', WinTaskbar);
</script>
</body>
</html>
